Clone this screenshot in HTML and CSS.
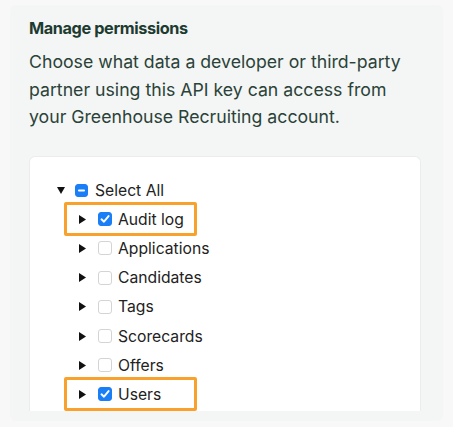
FILE: index.html
```html
<!DOCTYPE html>
<html>
<head>
<meta charset="utf-8">
<link rel="stylesheet" href="styles.css">
</head>
<body>
<div class="panel">
  <h2 class="title">Manage permissions</h2>
  <p class="desc">Choose what data a developer or third-party partner using this API key can access from your Greenhouse Recruiting account.</p>
  <div class="tree">
    <div class="row root">
      <svg class="tri" width="8" height="7" viewBox="0 0 8 7"><path d="M0 0H8L4 7Z" fill="#111"/></svg>
      <span class="cb mixed"><svg width="13" height="13" viewBox="0 0 13 13"><rect x="3" y="5.6" width="7" height="1.8" rx="0.9" fill="#fff"/></svg></span>
      <span class="label">Select All</span>
    </div>
    <div class="row child hl">
      <svg class="tri" width="7" height="9" viewBox="0 0 7 9"><path d="M0 0L7 4.5L0 9Z" fill="#111"/></svg>
      <span class="cb checked"><svg width="14" height="14" viewBox="0 0 14 14"><path d="M3.5 7.3L6 9.7L10.6 4.1" fill="none" stroke="#fff" stroke-width="1.9" stroke-linecap="round" stroke-linejoin="round"/></svg></span>
      <span class="label">Audit log</span>
    </div>
    <div class="row child">
      <svg class="tri" width="7" height="9" viewBox="0 0 7 9"><path d="M0 0L7 4.5L0 9Z" fill="#111"/></svg>
      <span class="cb"></span>
      <span class="label">Applications</span>
    </div>
    <div class="row child">
      <svg class="tri" width="7" height="9" viewBox="0 0 7 9"><path d="M0 0L7 4.5L0 9Z" fill="#111"/></svg>
      <span class="cb"></span>
      <span class="label">Candidates</span>
    </div>
    <div class="row child">
      <svg class="tri" width="7" height="9" viewBox="0 0 7 9"><path d="M0 0L7 4.5L0 9Z" fill="#111"/></svg>
      <span class="cb"></span>
      <span class="label">Tags</span>
    </div>
    <div class="row child">
      <svg class="tri" width="7" height="9" viewBox="0 0 7 9"><path d="M0 0L7 4.5L0 9Z" fill="#111"/></svg>
      <span class="cb"></span>
      <span class="label">Scorecards</span>
    </div>
    <div class="row child">
      <svg class="tri" width="7" height="9" viewBox="0 0 7 9"><path d="M0 0L7 4.5L0 9Z" fill="#111"/></svg>
      <span class="cb"></span>
      <span class="label">Offers</span>
    </div>
    <div class="row child hl">
      <svg class="tri" width="7" height="9" viewBox="0 0 7 9"><path d="M0 0L7 4.5L0 9Z" fill="#111"/></svg>
      <span class="cb checked"><svg width="14" height="14" viewBox="0 0 14 14"><path d="M3.5 7.3L6 9.7L10.6 4.1" fill="none" stroke="#fff" stroke-width="1.9" stroke-linecap="round" stroke-linejoin="round"/></svg></span>
      <span class="label">Users</span>
    </div>
  </div>
</div>
</body>
</html>
```

FILE: styles.css
```css
html, body {
  margin: 0;
  padding: 0;
}
body {
  background: #f8f8f8;
  width: 453px;
  height: 427px;
  overflow: hidden;
  font-family: Inter, "Liberation Sans", sans-serif;
}
.panel {
  margin: 5px 10px 0 10px;
  height: 416px;
  background: #f4f5f5;
  border-radius: 6px;
  padding: 11px 22px 0 19px;
  box-sizing: border-box;
}
.title {
  margin: 0;
  font-size: 16.3px;
  font-weight: 700;
  color: #1d3b30;
  line-height: 24px;
  letter-spacing: -0.4px;
}
.desc {
  margin: 8px 0 0 0;
  max-width: 385px;
  font-size: 17.7px;
  line-height: 27.5px;
  color: #2a4238;
}
.tree {
  margin-top: 25px;
  background: #fff;
  border: 1px solid #ececec;
  border-bottom: none;
  border-radius: 6px 6px 0 0;
  height: 255px;
  box-sizing: border-box;
  padding-top: 19px;
}
.row {
  display: flex;
  align-items: center;
  height: 29.2px;
  font-size: 15.7px;
  color: #222;
}
.root {
  padding-left: 27px;
}
.root .tri {
  margin-right: 10px;
}
.root .label {
  margin-left: 7px;
}
.child {
  padding-left: 49px;
}
.child .tri {
  margin-right: 12px;
}
.child .label {
  margin-left: 6px;
}
.cb {
  width: 13px;
  height: 13px;
  box-sizing: border-box;
  border: 1px solid #d4d4d4;
  border-radius: 3px;
  background: #fff;
  display: flex;
  flex: none;
}
.child .cb {
  width: 14px;
  height: 14px;
}
.cb svg {
  display: block;
  margin: -1px;
}
.cb.checked, .cb.mixed {
  background: #1a7ff6;
  border-color: #1a7ff6;
}
.hl {
  position: relative;
}
.hl::after {
  content: "";
  position: absolute;
  left: 34px;
  top: -3px;
  width: 133px;
  height: 34px;
  box-sizing: border-box;
  border: 3.5px solid #f8a22d;
  border-radius: 2px;
}
```
